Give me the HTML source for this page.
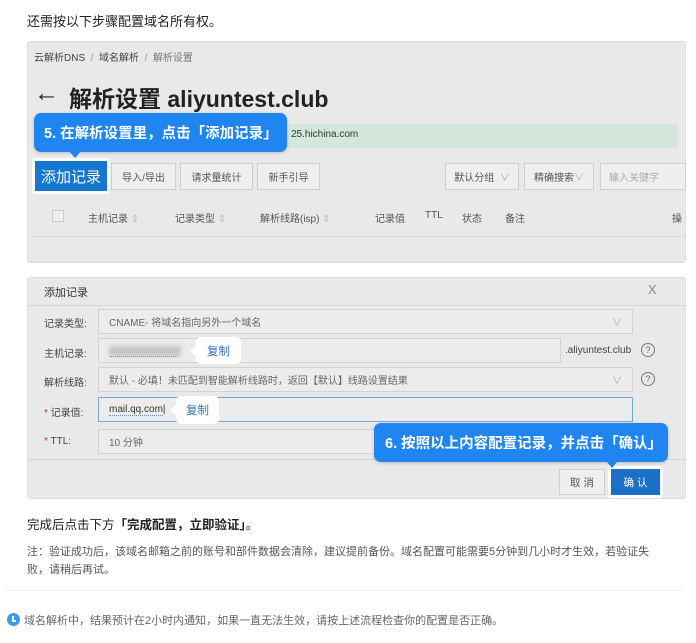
<!DOCTYPE html>
<html><head><meta charset="utf-8"><style>
*{margin:0;padding:0;box-sizing:border-box}
body{width:696px;height:643px;background:#fff;font-family:"Liberation Sans","Noto Sans CJK SC",sans-serif;position:relative;overflow:hidden;color:#333}
.a{position:absolute;white-space:nowrap}
.shot{position:absolute;background:#e9e9e9;border:1px solid #ddd;border-radius:3px}
.btn{position:absolute;background:#efefef;border:1px solid #cfcfcf;font-size:10px;color:#555;display:flex;align-items:center;justify-content:center}
.bub{position:absolute;background:#1f85f0;color:#fff;font-weight:bold;border-radius:7px;display:flex;align-items:center;box-shadow:0 1px 3px rgba(0,0,0,.2)}
.inp{position:absolute;background:#ececec;border:1px solid #d2d2d2;font-size:10px;color:#666;display:flex;align-items:center;padding-left:10px}
.lbl{position:absolute;font-size:10px;color:#444}
.q{position:absolute;width:14px;height:14px;border:1px solid #777;border-radius:50%;font-size:9px;color:#666;text-align:center;line-height:12px}
.cp{position:absolute;background:#fff;border-radius:5px;color:#2a74c9;font-size:11.5px;display:flex;align-items:center;justify-content:center}
</style></head><body>
<div class="a" style="left:27px;top:11px;font-size:13px;color:#222">还需按以下步骤配置域名所有权。</div>

<div class="shot" style="left:27px;top:41px;width:659px;height:222px"></div>
<div class="a" style="left:34px;top:49px;font-size:10px;color:#444">云解析DNS <span style="color:#999">&nbsp;/&nbsp;</span> 域名解析 <span style="color:#999">&nbsp;/&nbsp;</span> <span style="color:#777">解析设置</span></div>
<div class="a" style="left:34px;top:79px;font-size:25px;color:#222">&#8592;</div>
<div class="a" style="left:69px;top:80px;font-size:23px;font-weight:bold;color:#222">解析设置 aliyuntest.club</div>
<div class="a" style="left:280px;top:124px;width:398px;height:24px;background:#d5e6da"></div>
<div class="a" style="left:291px;top:129px;font-size:10px;color:#333">25.hichina.com</div>
<div class="bub" style="left:34px;top:113px;width:253px;height:39px;font-size:14.5px;padding-left:10px">5. 在解析设置里，点击「添加记录」</div>
<div class="a" style="left:69px;top:151px;width:0;height:0;border-left:6px solid transparent;border-right:6px solid transparent;border-top:7px solid #1f85f0"></div>
<div class="a" style="left:32px;top:158px;width:78px;height:36px;background:#fff;border-radius:3px"></div>
<div class="a" style="left:35px;top:161px;width:72px;height:30px;background:#1577d0;color:#fff;font-size:15px;display:flex;align-items:center;justify-content:center">添加记录</div>
<div class="btn" style="left:111px;top:163px;width:65px;height:27px">导入/导出</div>
<div class="btn" style="left:180px;top:163px;width:73px;height:27px">请求量统计</div>
<div class="btn" style="left:257px;top:163px;width:63px;height:27px">新手引导</div>
<div class="btn" style="left:445px;top:163px;width:74px;height:27px">默认分组 &nbsp;<span style="color:#aaa">∨</span></div>
<div class="btn" style="left:524px;top:163px;width:70px;height:27px">精确搜索<span style="color:#aaa">∨</span></div>
<div class="btn" style="left:600px;top:163px;width:86px;height:27px;justify-content:flex-start;padding-left:8px;color:#aaa">输入关键字</div>
<div class="a" style="left:52px;top:210px;width:12px;height:12px;border:1px solid #ccc;background:#eee"></div>
<div class="a" style="left:88px;top:210px;font-size:10px;color:#555">主机记录 <span style="color:#bbb">⇕</span></div>
<div class="a" style="left:175px;top:210px;font-size:10px;color:#555">记录类型 <span style="color:#bbb">⇕</span></div>
<div class="a" style="left:260px;top:210px;font-size:10px;color:#555">解析线路(isp) <span style="color:#bbb">⇕</span></div>
<div class="a" style="left:375px;top:210px;font-size:10px;color:#555">记录值</div>
<div class="a" style="left:425px;top:210px;font-size:10px;color:#555">TTL</div>
<div class="a" style="left:462px;top:210px;font-size:10px;color:#555">状态</div>
<div class="a" style="left:505px;top:210px;font-size:10px;color:#555">备注</div>
<div class="a" style="left:672px;top:210px;font-size:10px;color:#555">操</div>
<div class="a" style="left:34px;top:236px;width:652px;height:1px;background:#d8d8d8"></div>

<div class="shot" style="left:27px;top:277px;width:659px;height:222px"></div>
<div class="a" style="left:44px;top:284px;font-size:11px;color:#333">添加记录</div>
<div class="a" style="left:648px;top:282px;font-size:13px;color:#888">X</div>
<div class="a" style="left:28px;top:305px;width:657px;height:1px;background:#d5d5d5"></div>
<div class="lbl" style="left:44px;top:315px">记录类型:</div>
<div class="inp" style="left:98px;top:309px;width:535px;height:25px">CNAME- 将域名指向另外一个域名<span style="position:absolute;right:10px;color:#aaa">∨</span></div>
<div class="lbl" style="left:44px;top:345px">主机记录:</div>
<div class="inp" style="left:98px;top:338px;width:463px;height:25px"><span style="display:inline-block;width:72px;height:10px;background:#c4c4c4;filter:blur(2px)"></span></div>
<div class="a" style="left:110px;top:356px;width:68px;border-top:1px dotted #6c8fd0"></div>
<div class="a" style="left:565px;top:345px;font-size:10px;color:#444">.aliyuntest.club</div>
<div class="q" style="left:641px;top:343px">?</div>
<div class="cp" style="left:196px;top:337px;width:45px;height:27px">复制</div>
<div class="a" style="left:190px;top:346px;width:0;height:0;border-top:5px solid transparent;border-bottom:5px solid transparent;border-right:6px solid #fff"></div>
<div class="lbl" style="left:44px;top:374px">解析线路:</div>
<div class="inp" style="left:98px;top:367px;width:535px;height:25px">默认 - 必填！未匹配到智能解析线路时，返回【默认】线路设置结果<span style="position:absolute;right:10px;color:#aaa">∨</span></div>
<div class="q" style="left:641px;top:372px">?</div>
<div class="lbl" style="left:44px;top:404px"><span style="color:#c33">*</span> 记录值:</div>
<div class="inp" style="left:98px;top:397px;width:535px;height:25px;border:1.5px solid #7aa3d9;color:#333">mail.qq.com|</div>
<div class="a" style="left:109px;top:415px;width:54px;border-top:1px dotted #6c8fd0"></div>
<div class="cp" style="left:176px;top:396px;width:43px;height:28px">复制</div>
<div class="a" style="left:170px;top:405px;width:0;height:0;border-top:5px solid transparent;border-bottom:5px solid transparent;border-right:6px solid #fff"></div>
<div class="lbl" style="left:44px;top:436px"><span style="color:#c33">*</span> TTL:</div>
<div class="inp" style="left:98px;top:429px;width:535px;height:25px">10 分钟</div>
<div class="a" style="left:28px;top:459px;width:657px;height:1px;background:#d5d5d5"></div>
<div class="btn" style="left:559px;top:469px;width:46px;height:26px;font-size:10.5px">取 消</div>
<div class="a" style="left:608px;top:466px;width:55px;height:32px;background:#fff;border-radius:3px"></div>
<div class="a" style="left:611px;top:469px;width:49px;height:26px;background:#1a6fc7;color:#fff;font-size:10.5px;display:flex;align-items:center;justify-content:center">确 认</div>
<div class="bub" style="left:374px;top:423px;width:294px;height:39px;font-size:14.5px;padding-left:11px">6. 按照以上内容配置记录，并点击「确认」</div>
<div class="a" style="left:606px;top:461px;width:0;height:0;border-left:6px solid transparent;border-right:6px solid transparent;border-top:7px solid #1f85f0"></div>

<div class="a" style="left:27px;top:514px;font-size:12.5px;color:#222">完成后点击下方<b>「完成配置，立即验证」</b>。</div>
<div class="a" style="left:27px;top:543px;font-size:11px;color:#555;line-height:18px;white-space:normal;width:641px">注：验证成功后，该域名邮箱之前的账号和部件数据会清除，建议提前备份。域名配置可能需要5分钟到几小时才生效，若验证失败，请稍后再试。</div>
<div class="a" style="left:6px;top:590px;width:676px;height:1px;background:#eee"></div>
<div class="a" style="left:7px;top:613px;width:13px;height:13px;border-radius:50%;background:#3d9be9"></div>
<div class="a" style="left:12px;top:616px;width:2px;height:5px;background:#fff"></div>
<div class="a" style="left:12px;top:620px;width:4px;height:1.5px;background:#fff"></div>
<div class="a" style="left:24px;top:612px;font-size:11px;color:#666">域名解析中，结果预计在2小时内通知，如果一直无法生效，请按上述流程检查你的配置是否正确。</div>
</body></html>
